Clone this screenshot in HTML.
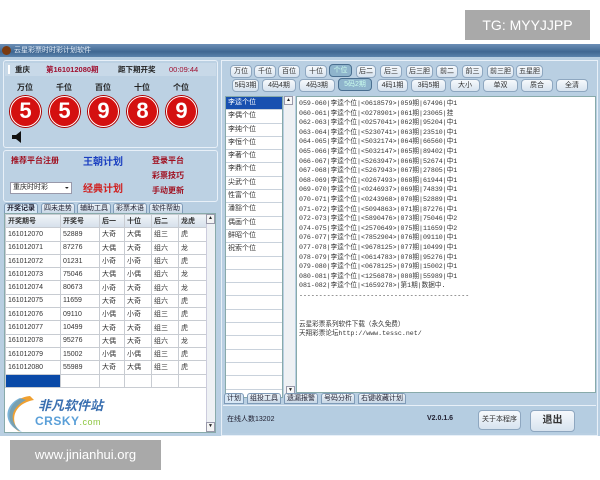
<!DOCTYPE html>
<html><head><meta charset="utf-8">
<style>
*{margin:0;padding:0;box-sizing:border-box}
body{width:600px;height:480px;background:#fff;position:relative;overflow:hidden;font-family:"Liberation Sans","Noto Sans CJK SC",sans-serif;font-size:7px;color:#222}
.a{position:absolute}
.ball{position:absolute;width:31px;height:31px;border-radius:50%;background:#d41010;border:1.5px solid #fff;box-shadow:0 0 0 1px #a00;color:#fff;font:bold 22px/28px "Liberation Sans",sans-serif;text-align:center}
.lbl{position:absolute;font-weight:bold;font-size:8px;color:#222}
.btn{position:absolute;height:13px;border:1px solid #8ea7c0;border-radius:4px;background:linear-gradient(#f6f9fc,#d7e3ef);font-size:7px;line-height:11px;text-align:center;color:#333}
table{border-collapse:collapse}
td{border:1px solid #c8ccd2;height:13.3px;padding-left:2px;font-size:7px;color:#333;white-space:nowrap}
.tab{position:absolute;height:11px;border:1px solid #7f9bb8;border-radius:3px 3px 0 0;background:linear-gradient(#eef3f8,#c8d7e6);font-size:7px;line-height:9px;padding:0 2px;color:#223}
.li{height:13.3px;border-bottom:1px solid #c9d2dc;padding-left:2px;line-height:12px;font-size:7px;color:#333}
.ln{height:9.6px;line-height:9.6px;font-size:6.6px;color:#333;white-space:nowrap;font-family:"Liberation Mono","Noto Sans CJK SC",monospace}
</style></head><body>
<div class="a" style="left:465px;top:10px;width:125px;height:30px;background:#a9a9a9;color:#fff;font-size:14px;line-height:30px;text-align:center">TG: MYYJJPP</div>

<div class="a" style="left:0;top:44px;width:600px;height:392px;background:#b9cfe2"></div>
<div class="a" style="left:0;top:44px;width:600px;height:13px;background:linear-gradient(#6c8fb6,#3f6792 60%,#5a82ab)"></div>
<div class="a" style="left:2px;top:46px;width:9px;height:9px;border-radius:50%;background:#7a3a10"></div>
<div class="a" style="left:14px;top:45px;color:#dfe9f4;font-size:7px">云星彩票时时彩计划软件</div>

<div class="a" style="left:3px;top:60px;width:215px;height:88px;border:1px solid #e8f0f8;border-radius:3px;background:#bcd1e3"></div>
<div class="a" style="left:5px;top:63px;width:211px;height:13px;background:#c8d9e8;font-weight:bold;font-size:7.5px;line-height:13px">
<span style="position:absolute;left:3px;top:2px;width:2px;height:9px;background:#fff"></span>
<span style="position:absolute;left:10px">重庆</span>
<span style="position:absolute;left:41px;color:#a01030">第161012080期</span>
<span style="position:absolute;left:113px">距下期开奖</span>
<span style="position:absolute;left:164px;color:#a01030;font-weight:normal">00:09:44</span></div>
<div class="lbl" style="left:17px;top:82px">万位</div>
<div class="lbl" style="left:56px;top:82px">千位</div>
<div class="lbl" style="left:95px;top:82px">百位</div>
<div class="lbl" style="left:134px;top:82px">十位</div>
<div class="lbl" style="left:173px;top:82px">个位</div>
<div class="ball" style="left:10px;top:96px">5</div>
<div class="ball" style="left:49px;top:96px">5</div>
<div class="ball" style="left:88px;top:96px">9</div>
<div class="ball" style="left:127px;top:96px">8</div>
<div class="ball" style="left:166px;top:96px">9</div>
<svg class="a" style="left:11px;top:131px" width="14" height="12"><rect x="1" y="4" width="4" height="4" fill="#111"/><path d="M5 4 L10 0 L10 12 L5 8Z" fill="#111"/></svg>

<div class="a" style="left:3px;top:150px;width:215px;height:52px;border:1px solid #e8f0f8;border-radius:3px;background:#bcd1e3"></div>
<div class="a" style="left:11px;top:155px;color:#a01020;font-weight:bold;font-size:8px">推荐平台注册</div>
<div class="a" style="left:83px;top:153px;color:#1a3fc0;font-weight:bold;font-size:10px">王朝计划</div>
<div class="a" style="left:152px;top:155px;color:#a01020;font-weight:bold;font-size:8px">登录平台</div>
<div class="a" style="left:152px;top:170px;color:#a01020;font-weight:bold;font-size:8px">彩票技巧</div>
<div class="a" style="left:152px;top:185px;color:#a01020;font-weight:bold;font-size:8px">手动更新</div>
<div class="a" style="left:10px;top:182px;width:62px;height:12px;background:#fff;border:1px solid #99a;font-size:7px;line-height:10px;padding-left:2px">重庆时时彩 <span style="float:right;margin-right:2px">◒</span></div>
<div class="a" style="left:83px;top:180px;color:#d02020;font-weight:bold;font-size:10px">经典计划</div>

<div class="tab" style="left:4px;top:203px;background:#d7e7f5;font-weight:bold">开奖记录</div>
<div class="tab" style="left:41px;top:203px">四未走势</div>
<div class="tab" style="left:77px;top:203px">辅助工具</div>
<div class="tab" style="left:113px;top:203px">彩票术语</div>
<div class="tab" style="left:149px;top:203px">软件帮助</div>

<div class="a" style="left:4px;top:213px;width:212px;height:220px;background:#fff;border:1px solid #8aa"></div>
<table class="a" style="left:5px;top:214px">
<tr style="background:linear-gradient(#f0f4f8,#d4dfea);font-weight:bold"><td style="width:55px;font-weight:bold">开奖期号</td><td style="width:39px;font-weight:bold">开奖号</td><td style="width:25px;font-weight:bold">后一</td><td style="width:27px;font-weight:bold">十位</td><td style="width:27px;font-weight:bold">后二</td><td style="width:28px;font-weight:bold">龙虎</td></tr>
<tr><td>161012070</td><td>52889</td><td>大奇</td><td>大偶</td><td>组三</td><td>虎</td></tr>
<tr><td>161012071</td><td>87276</td><td>大偶</td><td>大奇</td><td>组六</td><td>龙</td></tr>
<tr><td>161012072</td><td>01231</td><td>小奇</td><td>小奇</td><td>组六</td><td>虎</td></tr>
<tr><td>161012073</td><td>75046</td><td>大偶</td><td>小偶</td><td>组六</td><td>龙</td></tr>
<tr><td>161012074</td><td>80673</td><td>小奇</td><td>大奇</td><td>组六</td><td>龙</td></tr>
<tr><td>161012075</td><td>11659</td><td>大奇</td><td>大奇</td><td>组六</td><td>虎</td></tr>
<tr><td>161012076</td><td>09110</td><td>小偶</td><td>小奇</td><td>组三</td><td>虎</td></tr>
<tr><td>161012077</td><td>10499</td><td>大奇</td><td>大奇</td><td>组三</td><td>虎</td></tr>
<tr><td>161012078</td><td>95276</td><td>大偶</td><td>大奇</td><td>组六</td><td>龙</td></tr>
<tr><td>161012079</td><td>15002</td><td>小偶</td><td>小偶</td><td>组三</td><td>虎</td></tr>
<tr><td>161012080</td><td>55989</td><td>大奇</td><td>大偶</td><td>组三</td><td>虎</td></tr>
<tr><td style="background:#0a4aa8"></td><td></td><td></td><td></td><td></td><td></td></tr>
</table>
<div class="a" style="left:206px;top:214px;width:9px;height:218px;background:#eef1f4;border-left:1px solid #ccd"></div>
<div class="a" style="left:206px;top:422px;width:9px;height:10px;border:1px solid #99a;background:#f4f4f4;font-size:5px;text-align:center">▼</div>
<div class="a" style="left:206px;top:214px;width:9px;height:10px;border:1px solid #99a;background:#f4f4f4;font-size:5px;text-align:center">▲</div>
<svg class="a" style="left:0;top:392px" width="40" height="42"><path d="M30 4 C8 6 2 30 20 40 C10 30 12 12 34 8Z" fill="#f0a030"/><path d="M20 6 C2 14 4 34 22 40 C8 30 10 16 26 8Z" fill="#5aa0d0" opacity=".8"/></svg>
<div class="a" style="left:38px;top:395px;color:#3a6fb0;font-weight:bold;font-style:italic;font-size:13px">非凡软件站</div>
<div class="a" style="left:35px;top:414px;color:#5a9fd8;font-weight:bold;font-size:12px;letter-spacing:0.5px">CRSKY<span style="color:#8cc63f;font-size:9px;font-weight:normal">.com</span></div>

<div class="a" style="left:10px;top:440px;width:151px;height:30px;background:#a9a9a9;color:#fff;font-size:13px;line-height:30px;text-align:center">www.jinianhui.org</div>

<div class="a" style="left:221px;top:60px;width:377px;height:376px;border:1px solid #e8f0f8;background:#b9cfe2"></div>
<div class="btn" style="left:230px;top:65px;width:22px">万位</div>
<div class="btn" style="left:254px;top:65px;width:22px">千位</div>
<div class="btn" style="left:278px;top:65px;width:22px">百位</div>
<div class="btn" style="left:305px;top:65px;width:22px">十位</div>
<div class="btn" style="left:329px;top:64px;width:23px;background:#8fb4cc;border-color:#4a6f90;color:#cfe">个位</div>
<div class="btn" style="left:356px;top:65px;width:20px">后二</div>
<div class="btn" style="left:380px;top:65px;width:22px">后三</div>
<div class="btn" style="left:406px;top:65px;width:27px">后三胆</div>
<div class="btn" style="left:436px;top:65px;width:22px">前二</div>
<div class="btn" style="left:462px;top:65px;width:21px">前三</div>
<div class="btn" style="left:487px;top:65px;width:27px">前三胆</div>
<div class="btn" style="left:516px;top:65px;width:27px">五星胆</div>
<div class="btn" style="left:232px;top:79px;width:27px">5码3期</div>
<div class="btn" style="left:262px;top:79px;width:34px">4码4期</div>
<div class="btn" style="left:299px;top:79px;width:36px">4码3期</div>
<div class="btn" style="left:338px;top:78px;width:34px;background:#8fb4cc;border-color:#4a6f90;color:#cfe">5码2期</div>
<div class="btn" style="left:377px;top:79px;width:31px">4码1期</div>
<div class="btn" style="left:411px;top:79px;width:35px">3码5期</div>
<div class="btn" style="left:450px;top:79px;width:30px">大小</div>
<div class="btn" style="left:483px;top:79px;width:35px">单双</div>
<div class="btn" style="left:521px;top:79px;width:32px">质合</div>
<div class="btn" style="left:556px;top:79px;width:32px">全清</div>

<div class="a" style="left:225px;top:96px;width:58px;height:302px;background:#fff;border:1px solid #8aa">
<div class="li" style="background:#1850b0;color:#fff">李逵个位</div>
<div class="li">李偶个位</div><div class="li">李纯个位</div><div class="li">李恒个位</div><div class="li">李著个位</div><div class="li">李鼎个位</div><div class="li">尖武个位</div><div class="li">性富个位</div><div class="li">潘豁个位</div><div class="li">偶画个位</div><div class="li">鲜昭个位</div><div class="li">祝索个位</div>
<div class="li"></div><div class="li"></div><div class="li"></div><div class="li"></div><div class="li"></div><div class="li"></div><div class="li"></div><div class="li"></div><div class="li"></div><div class="li"></div>
</div>
<div class="a" style="left:284px;top:96px;width:11px;height:302px;background:#eef1f4"></div>
<div class="a" style="left:284px;top:96px;width:9px;height:9px;border:1px solid #99a;background:#f8f8f8;font-size:5px;text-align:center">▲</div>
<div class="a" style="left:286px;top:386px;width:9px;height:9px;border:1px solid #99a;background:#f8f8f8;font-size:5px;text-align:center">▼</div>

<div class="a" style="left:296px;top:96px;width:300px;height:297px;background:#fff;border:1px solid #8aa;padding:2px 0 0 2px">
<div class="ln">059-060|李逵个位|&lt;0618579&gt;|059期|67496|中1</div>
<div class="ln">060-061|李逵个位|&lt;0278901&gt;|061期|23065|挂</div>
<div class="ln">062-063|李逵个位|&lt;0257041&gt;|062期|95204|中1</div>
<div class="ln">063-064|李逵个位|&lt;5230741&gt;|063期|23510|中1</div>
<div class="ln">064-065|李逵个位|&lt;5032174&gt;|064期|66560|中1</div>
<div class="ln">065-066|李逵个位|&lt;5032147&gt;|065期|89402|中1</div>
<div class="ln">066-067|李逵个位|&lt;5263947&gt;|066期|52674|中1</div>
<div class="ln">067-068|李逵个位|&lt;5267943&gt;|067期|27805|中1</div>
<div class="ln">068-069|李逵个位|&lt;0267493&gt;|068期|61944|中1</div>
<div class="ln">069-070|李逵个位|&lt;0246937&gt;|069期|74839|中1</div>
<div class="ln">070-071|李逵个位|&lt;0243968&gt;|070期|52889|中1</div>
<div class="ln">071-072|李逵个位|&lt;5094863&gt;|071期|87276|中1</div>
<div class="ln">072-073|李逵个位|&lt;5890476&gt;|073期|75046|中2</div>
<div class="ln">074-075|李逵个位|&lt;2570649&gt;|075期|11659|中2</div>
<div class="ln">076-077|李逵个位|&lt;7852904&gt;|076期|09110|中1</div>
<div class="ln">077-078|李逵个位|&lt;9678125&gt;|077期|10499|中1</div>
<div class="ln">078-079|李逵个位|&lt;0614783&gt;|078期|95276|中1</div>
<div class="ln">079-080|李逵个位|&lt;0678125&gt;|079期|15002|中1</div>
<div class="ln">080-081|李逵个位|&lt;1256878&gt;|080期|55989|中1</div>
<div class="ln">081-082|李逵个位|&lt;1659278&gt;|第1期|数据中.</div>
<div class="ln">-------------------------------------------</div>
<div class="ln"></div><div class="ln"></div>
<div class="ln">云星彩票系列软件下载（永久免费）</div>
<div class="ln">天翔彩票论坛http://www.tessc.net/</div>
</div>

<div class="tab" style="left:224px;top:393px;background:#d7e7f5">计划</div>
<div class="tab" style="left:247px;top:393px">组投工具</div>
<div class="tab" style="left:284px;top:393px">遗漏报警</div>
<div class="tab" style="left:321px;top:393px">号码分析</div>
<div class="tab" style="left:358px;top:393px">右键收藏计划</div>

<div class="a" style="left:223px;top:405px;width:373px;height:28px;border-top:1px solid #e8f0f8;background:#b5cde1"></div>
<div class="a" style="left:227px;top:414px;font-size:7px;color:#223">在线人数13202</div>
<div class="a" style="left:427px;top:415px;font-size:7px;font-weight:bold;color:#223">V2.0.1.6</div>
<div class="btn" style="left:478px;top:410px;width:43px;height:20px;line-height:18px">关于本程序</div>
<div class="btn" style="left:530px;top:410px;width:45px;height:22px;line-height:20px;font-size:10px;font-weight:bold">退出</div>
</body></html>
